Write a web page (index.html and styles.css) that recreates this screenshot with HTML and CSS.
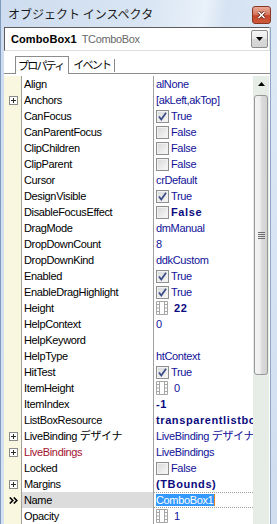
FILE: index.html
```html
<!DOCTYPE html>
<html lang="ja">
  <head>
    <meta charset="UTF-8" />
    <meta name="viewport" content="width=device-width, initial-scale=1.0" />
    <title>オブジェクト インスペクタ</title>
    <link rel="stylesheet" href="styles.css">
  </head>
  <body>
    <div class="window">
      <div class="titlebar">
        <span class="title">オブジェクト インスペクタ</span>
        <div class="close">
          <svg width="9" height="8" viewBox="0 0 9 8"><path d="M1.5 1l6 6M7.5 1l-6 6" stroke="#5a1d10" stroke-width="3"/><path d="M1.5 1l6 6M7.5 1l-6 6" stroke="#fff" stroke-width="1.6"/></svg>
        </div>
      </div>
      <div class="body">
        <div class="panel">
          <div class="combo">
            <span class="combo-name">ComboBox1</span>
            <span class="combo-type">TComboBox</span>
            <div class="combo-btn">
              <svg width="7" height="4" viewBox="0 0 7 4"><path d="M0 0h7L3.5 4z" fill="#000"/></svg>
            </div>
          </div>
          <div class="tabs">
            <div class="tab active">プロパティ</div>
            <div class="tab">イベント</div>
            <span class="tab-sep"></span>
          </div>
          <div class="grid-wrap">
            <div class="grid">
              <div class="row"><span class="gut"></span><span class="name">Align</span><span class="val">alNone</span></div>
              <div class="row"><span class="gut"><span class="plus"></span></span><span class="name">Anchors</span><span class="val">[akLeft,akTop]</span></div>
              <div class="row"><span class="gut"></span><span class="name">CanFocus</span><span class="val"><span class="cb"><svg width="9" height="9" viewBox="0 0 9 9"><path d="M1 4.5l2.3 3L8 0.8" stroke="#3d4f86" stroke-width="1.8" fill="none"/></svg></span>True</span></div>
              <div class="row"><span class="gut"></span><span class="name">CanParentFocus</span><span class="val"><span class="cb"></span>False</span></div>
              <div class="row"><span class="gut"></span><span class="name">ClipChildren</span><span class="val"><span class="cb"></span>False</span></div>
              <div class="row"><span class="gut"></span><span class="name">ClipParent</span><span class="val"><span class="cb"></span>False</span></div>
              <div class="row"><span class="gut"></span><span class="name">Cursor</span><span class="val">crDefault</span></div>
              <div class="row"><span class="gut"></span><span class="name">DesignVisible</span><span class="val"><span class="cb"><svg width="9" height="9" viewBox="0 0 9 9"><path d="M1 4.5l2.3 3L8 0.8" stroke="#3d4f86" stroke-width="1.8" fill="none"/></svg></span>True</span></div>
              <div class="row"><span class="gut"></span><span class="name">DisableFocusEffect</span><span class="val bold"><span class="cb"></span>False</span></div>
              <div class="row"><span class="gut"></span><span class="name">DragMode</span><span class="val">dmManual</span></div>
              <div class="row"><span class="gut"></span><span class="name">DropDownCount</span><span class="val">8</span></div>
              <div class="row"><span class="gut"></span><span class="name">DropDownKind</span><span class="val">ddkCustom</span></div>
              <div class="row"><span class="gut"></span><span class="name">Enabled</span><span class="val"><span class="cb"><svg width="9" height="9" viewBox="0 0 9 9"><path d="M1 4.5l2.3 3L8 0.8" stroke="#3d4f86" stroke-width="1.8" fill="none"/></svg></span>True</span></div>
              <div class="row"><span class="gut"></span><span class="name">EnableDragHighlight</span><span class="val"><span class="cb"><svg width="9" height="9" viewBox="0 0 9 9"><path d="M1 4.5l2.3 3L8 0.8" stroke="#3d4f86" stroke-width="1.8" fill="none"/></svg></span>True</span></div>
              <div class="row"><span class="gut"></span><span class="name">Height</span><span class="val bold"><svg class="film" width="12" height="14" viewBox="0 0 12 14"><path d="M0.5 0.5h11v13h-11zM3.5 0.5v13M8.5 0.5v13M0.5 3.5h3M0.5 7h3M0.5 10.5h3M8.5 3.5h3M8.5 7h3M8.5 10.5h3" stroke="#a6a6a6" fill="none"/></svg>22</span></div>
              <div class="row"><span class="gut"></span><span class="name">HelpContext</span><span class="val">0</span></div>
              <div class="row"><span class="gut"></span><span class="name">HelpKeyword</span><span class="val"></span></div>
              <div class="row"><span class="gut"></span><span class="name">HelpType</span><span class="val">htContext</span></div>
              <div class="row"><span class="gut"></span><span class="name">HitTest</span><span class="val"><span class="cb"><svg width="9" height="9" viewBox="0 0 9 9"><path d="M1 4.5l2.3 3L8 0.8" stroke="#3d4f86" stroke-width="1.8" fill="none"/></svg></span>True</span></div>
              <div class="row"><span class="gut"></span><span class="name">ItemHeight</span><span class="val"><svg class="film" width="12" height="14" viewBox="0 0 12 14"><path d="M0.5 0.5h11v13h-11zM3.5 0.5v13M8.5 0.5v13M0.5 3.5h3M0.5 7h3M0.5 10.5h3M8.5 3.5h3M8.5 7h3M8.5 10.5h3" stroke="#a6a6a6" fill="none"/></svg>0</span></div>
              <div class="row"><span class="gut"></span><span class="name">ItemIndex</span><span class="val bold">-1</span></div>
              <div class="row"><span class="gut"></span><span class="name">ListBoxResource</span><span class="val bold">transparentlistbox</span></div>
              <div class="row"><span class="gut"><span class="plus"></span></span><span class="name">LiveBinding デザイナ</span><span class="val">LiveBinding デザイナ</span></div>
              <div class="row"><span class="gut"><span class="plus"></span></span><span class="name ref">LiveBindings</span><span class="val">LiveBindings</span></div>
              <div class="row"><span class="gut"></span><span class="name">Locked</span><span class="val"><span class="cb"></span>False</span></div>
              <div class="row"><span class="gut"><span class="plus"></span></span><span class="name">Margins</span><span class="val bold">(TBounds)</span></div>
              <div class="row sel"><span class="gut"><svg width="9" height="7" viewBox="0 0 9 7"><path d="M0.8 0.5l3 3-3 3M4.8 0.5l3 3-3 3" stroke="#000" stroke-width="1.6" fill="none"/></svg></span><span class="name">Name</span><span class="val"><span class="hl">ComboBox1</span></span></div>
              <div class="row"><span class="gut"></span><span class="name">Opacity</span><span class="val"><svg class="film" width="12" height="14" viewBox="0 0 12 14"><path d="M0.5 0.5h11v13h-11zM3.5 0.5v13M8.5 0.5v13M0.5 3.5h3M0.5 7h3M0.5 10.5h3M8.5 3.5h3M8.5 7h3M8.5 10.5h3" stroke="#a6a6a6" fill="none"/></svg>1</span></div>
            </div>
            <div class="sb">
              <div class="sb-up">
                <svg width="7" height="4" viewBox="0 0 7 4"><path d="M0 4h7L3.5 0z" fill="#000"/></svg>
              </div>
              <div class="thumb">
                <svg width="7" height="7" viewBox="0 0 7 7"><path d="M0 0.5h7M0 2.5h7M0 4.5h7M0 6.5h7" stroke="#6f6f6f"/></svg>
              </div>
            </div>
          </div>
        </div>
        <div class="rframe"></div>
      </div>
    </div>
  </body>
</html>
```

FILE: styles.css
```css
* {
  margin: 0;
  padding: 0;
  box-sizing: border-box;
}

body {
  width: 277px;
  height: 524px;
  overflow: hidden;
  font-family: "Liberation Sans", "Noto Sans CJK JP", sans-serif;
  font-size: 11px;
  color: #000;
}

/* ウィンドウ枠 */
.window {
  width: 277px;
  height: 524px;
  display: flex;
  flex-direction: column;
  background: linear-gradient(100deg, #cddcef 0%, #d9e5f3 40%, #e9f1fa 56%, #d6e3f2 62%, #dde8f5 78%, #cfddef 100%);
  box-shadow: inset 1px 0 0 #7f9bc0;
}

.titlebar {
  height: 27px;
  display: flex;
  justify-content: space-between;
  align-items: flex-start;
  padding-left: 8px;
}

.title {
  font-family: "Noto Sans CJK JP", sans-serif;
  font-size: 12px;
  line-height: 27px;
  color: #1b1b1b;
}

.close {
  width: 19px;
  height: 18px;
  margin: 6px 6px 0 0;
  border: 1px solid #8a3623;
  border-radius: 3px;
  background: linear-gradient(#e9ab98, #d77a62 45%, #c4462b 55%, #cd5a3c);
  display: flex;
  align-items: center;
  justify-content: center;
}

.body {
  flex: 1;
  display: flex;
  padding-left: 4px;
  min-height: 0;
}

.panel {
  width: 266px;
  background: #fff;
  display: flex;
  flex-direction: column;
}

.rframe {
  flex: 1;
  border-left: 1px solid #8ea6c6;
}

/* コンボボックス */
.combo {
  height: 24px;
  display: flex;
  align-items: center;
  padding: 0 1px 0 6px;
  border: 1px solid;
  border-color: #5c5c5c #dfe6df #d8e0d8 #5c5c5c;
}

.combo-name {
  font-weight: bold;
  letter-spacing: 0.1px;
}

.combo-type {
  color: #6a6a6a;
  margin-left: 5px;
  letter-spacing: -0.35px;
}

.combo-btn {
  margin-left: auto;
  width: 17px;
  height: 18px;
  border: 1px solid #8b8b8b;
  border-radius: 2px;
  background: linear-gradient(#f6f6f6, #e8e8e8 50%, #d9d9d9 51%, #d3d3d3);
  display: flex;
  align-items: center;
  justify-content: center;
}

/* タブ */
.tabs {
  height: 23px;
  display: flex;
  align-items: flex-end;
  padding-left: 11px;
  border-bottom: 1px solid #8c8c8c;
  margin-bottom: 2px;
}

.tab {
  font-family: "Noto Sans CJK JP", sans-serif;
  font-size: 11px;
  letter-spacing: -1.8px;
  height: 16px;
  line-height: 15px;
  padding: 0 4px 0 4px;
  white-space: nowrap;
  overflow: hidden;
}

.tab.active {
  height: 18px;
  padding: 1px 5px 0 2px;
  margin-bottom: -1px;
  border: 1px solid #8c8c8c;
  border-bottom: none;
  background: #fff;
}

.tab-sep {
  width: 1px;
  height: 13px;
  margin-bottom: 1px;
  background: #8c8c8c;
}

/* プロパティ一覧 */
.grid-wrap {
  flex: 1;
  display: flex;
  padding-right: 1px;
  overflow: hidden;
}

.grid {
  width: 249px;
}

.row {
  display: flex;
  height: 16px;
  line-height: 16px;
}

.gut {
  width: 18px;
  background: #faf7e0;
  border-right: 1px solid #a0a0a0;
  display: flex;
  align-items: center;
  justify-content: center;
  padding-left: 1px;
}

.plus {
  width: 9px;
  height: 9px;
  border: 1px solid #8a8a8a;
  background: #fff;
  position: relative;
}

.plus::before,
.plus::after {
  content: "";
  position: absolute;
  background: #2a2a2a;
}

.plus::before {
  left: 1px;
  top: 3px;
  width: 5px;
  height: 1px;
}

.plus::after {
  left: 3px;
  top: 1px;
  width: 1px;
  height: 5px;
}

.name {
  width: 132px;
  padding-left: 2px;
  border-right: 1px solid #a0a0a0;
  white-space: nowrap;
  overflow: hidden;
  letter-spacing: -0.35px;
}

.name.ref {
  color: #a3122e;
}

.val {
  flex: 1;
  padding-left: 2px;
  color: #12129a;
  white-space: nowrap;
  overflow: hidden;
  display: flex;
  align-items: center;
  letter-spacing: -0.35px;
}

.val.bold {
  font-weight: bold;
  color: #0a0a80;
  letter-spacing: 0.6px;
}

.cb {
  flex: none;
  width: 13px;
  height: 13px;
  margin-right: 2px;
  border: 1px solid #8f8f8f;
  background: linear-gradient(135deg, #d8d9da, #f8f8f8);
  box-shadow: inset 0 0 0 1px #f2f2f2;
  display: flex;
  align-items: center;
  justify-content: center;
}

.film {
  flex: none;
  margin-right: 6px;
}

.row.sel .name {
  background: #dcdcdc;
}

.row.sel .val {
  border-top: 1px dotted #9a9a9a;
  border-bottom: 1px dotted #9a9a9a;
}

.hl {
  background: #3399ff;
  color: #fff;
  line-height: 12px;
  padding-right: 1px;
  border-right: 1px solid #e0802a;
}

/* スクロールバー */
.sb {
  width: 16px;
  background: #e6ede6;
  display: flex;
  flex-direction: column;
  align-items: center;
}

.sb-up {
  width: 16px;
  height: 16px;
  display: flex;
  align-items: center;
  justify-content: center;
}

.thumb {
  width: 14px;
  height: 280px;
  margin-top: 3px;
  border: 1px solid #979797;
  border-radius: 3px;
  background: linear-gradient(to right, #f5f5f5, #ebebeb 50%, #dcdcdc 51%, #d2d2d2);
  display: flex;
  align-items: center;
  justify-content: center;
}
```
